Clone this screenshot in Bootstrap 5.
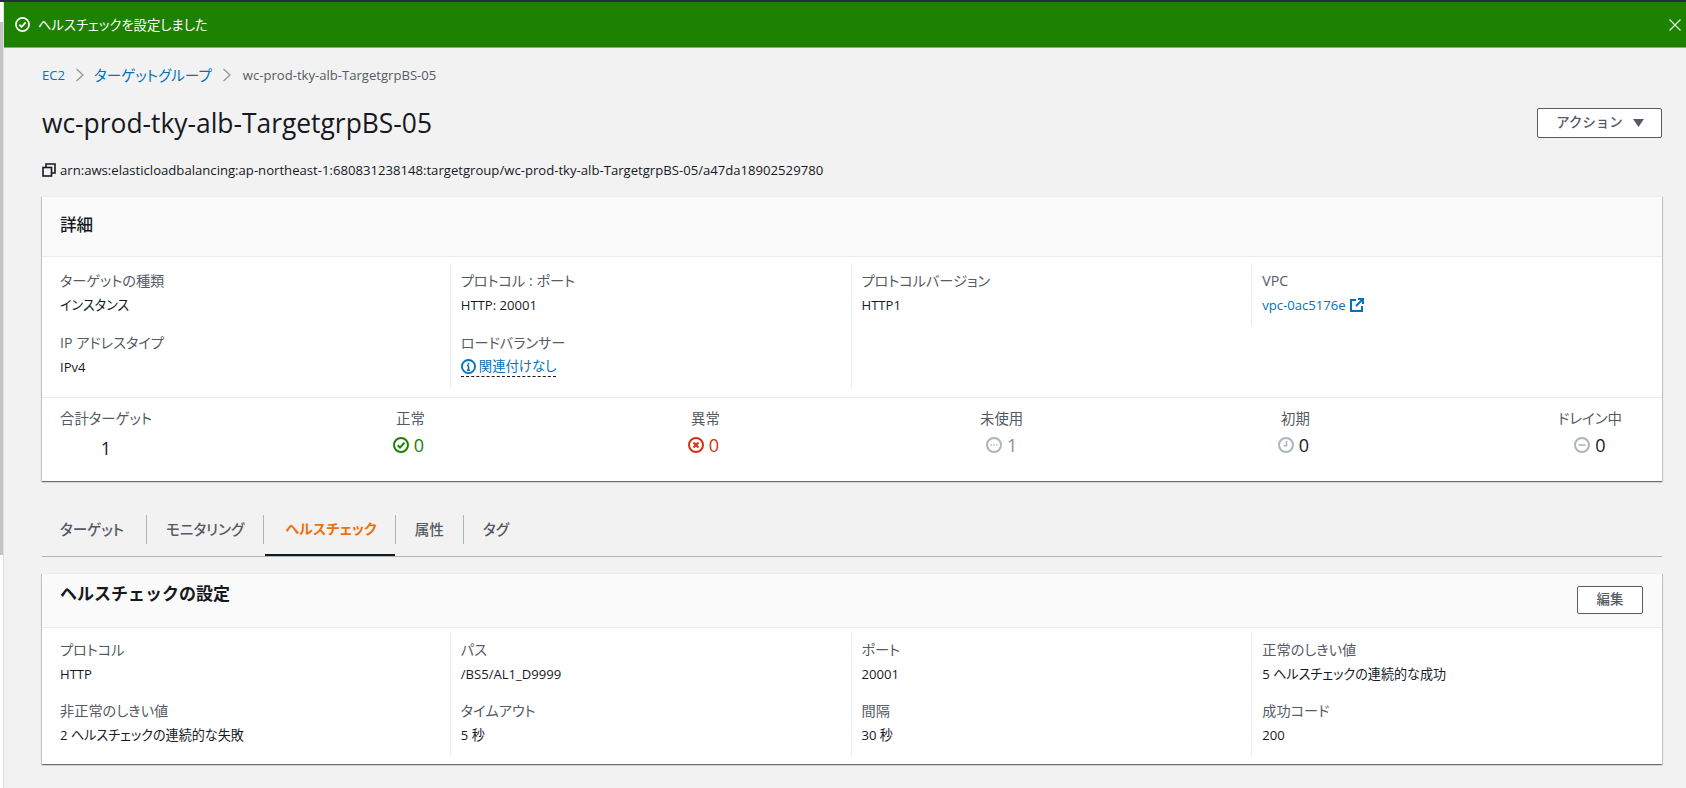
<!doctype html>
<html lang="ja">
<head>
<meta charset="utf-8">
<title>wc-prod-tky-alb-TargetgrpBS-05</title>
<link rel="stylesheet" href="https://cdn.jsdelivr.net/npm/bootstrap@5.3.0/dist/css/bootstrap.min.css">
<style>
html,body{height:100%;overflow:hidden}
body{background:#f2f2f2;color:#16191f;font-family:"Open Sans","Noto Sans CJK JP",sans-serif;font-size:13.1px;font-feature-settings:"palt";line-height:20px}
.top-strip{height:2px;background:#232f3e}
.page-shell{height:786px}
.side-rail{width:4px;background:#fff;border-right:1px solid #e0e0e0}
.side-thumb{width:3px;height:533px;margin-top:20px;background:#c4c4c4}
.flash-bar{height:46px;background:#1d8102;color:#fff;padding:0 5px 0 11px;gap:8px;border-bottom:1px solid #7fb56f;font-size:13.3px}
.flash-close{background:none;border:0;padding:0;width:12px;height:12px;line-height:0}
.page-body{padding:0 24px 0 38px}
.crumbs{height:20px;margin:17px 0 0;gap:9px;font-size:13.1px}
.crumbs a{color:#0073bb;text-decoration:none}
.crumb-jp{font-size:14.6px}
.crumb-now{color:#545b64;margin-left:2px}
.crumb-sep{width:11px;height:14px}
.head-row{height:30px;margin-top:23px}
.page-title{font-size:26.4px;font-weight:400;line-height:30px;margin:0}
.act-btn{width:125px;height:30px;background:#fff;border:1px solid #545b64;border-radius:2px;color:#545b64;font-size:13.4px;font-weight:500;padding:0 0 0 1px;line-height:1;gap:10px}
.act-btn:hover{background:#fff;color:#545b64;border-color:#545b64}
.arn-row{margin-top:22px;height:20px;gap:4px;font-size:13.14px}
.info-panel{background:#fff;border:0;border-radius:0;box-shadow:0 1px 1px 0 rgba(0,28,36,.45),1px 1px 1px 0 rgba(0,28,36,.15),-1px 1px 1px 0 rgba(0,28,36,.15);border-top:1px solid #eaeded}
.panel-one{margin-top:16px;height:285px}
.panel-two{margin-top:16px;height:191px}
.panel-head{background:#fafafa;border-bottom:1px solid #eaeded;padding:0 18px;font-size:17px;font-weight:700;border-radius:0}
.panel-one .panel-head{height:60px;line-height:56px;font-weight:500;font-size:16.6px}
.panel-two .panel-head{height:54px;line-height:40px;font-feature-settings:normal}
.kv-grid{display:grid;grid-template-columns:repeat(4,1fr);padding:0 10px 0 7px}
.panel-one .kv-grid{padding-top:6px;height:140px}
.panel-two .kv-grid{padding-top:5px}
.kv-col{padding:8px 10px 0;border-left:1px solid #eaeded}
.kv-col:first-child{border-left:0;padding-left:11px}
.panel-one .kv-col{height:125px}
.panel-one .kv-col.kv-short{height:62px}
.panel-two .kv-col{height:123px;padding-top:7px}
.kv-label{color:#545b64;font-size:14.2px;line-height:20px}
.kv-value{line-height:20px;margin-top:4px}
.kv-item+.kv-item{margin-top:18px}
.panel-two .kv-value{margin-top:4px}
.panel-two .kv-item+.kv-item{margin-top:17px}
.kv-link{color:#0073bb;text-decoration:none}
.lb-link{color:#0073bb;display:inline-flex;align-items:center;gap:3px;border-bottom:1px dashed #16191f;text-decoration:none;line-height:19px;font-size:13.4px}
.stat-row{display:grid;grid-template-columns:332px 295px 293px 297px 281px 1fr;border-top:1px solid #eaeded;padding:11px 0 0 18px}
.stat-cell{display:inline-flex;flex-direction:column;align-items:center;justify-self:start}
.stat-label{color:#545b64;font-size:14.4px;line-height:20px}
.stat-nudge{padding-left:4px}
.stat-num{display:flex;align-items:center;gap:5px;font-size:18px;line-height:26px;margin-top:3px}
.stat-one{margin-top:6px;color:#16191f}
.tone-ok{color:#1d8102}.tone-bad{color:#d13212}.tone-off{color:#879596}
.tab-strip{margin-top:21px;height:55px;border-bottom:1px solid #aab7b8;flex-wrap:nowrap}
.tab-item{position:relative;font-weight:500;color:#545b64;font-size:14.6px;padding:0 19px;height:29px;line-height:28px;margin-top:13px;border-right:1px solid #aab7b8;text-decoration:none}
.tab-item:first-child{padding:0 19px 0 18px;width:105px}
.tab-item:last-child{border-right:0}
.tab-item:hover{color:#545b64}
.tab-on,.tab-on:hover{color:#ec7211;font-weight:700;font-size:14.2px;padding:0 18px 0 21px}
.tab-on:after{content:"";position:absolute;left:1px;right:0;top:39px;height:2px;background:#16191f}
.edit-btn{width:66px;height:28px;background:#fff;border:1px solid #545b64;border-radius:2px;color:#545b64;font-size:13.4px;font-weight:500;padding:0;line-height:1;margin-top:12px}
.edit-btn:hover{background:#fff;color:#545b64;border-color:#545b64}
.head-split{padding-right:19px}
</style>
</head>
<body>
<div class="top-strip"></div>
<div class="d-flex page-shell">
  <div class="side-rail flex-shrink-0"><div class="side-thumb"></div></div>
  <main class="flex-grow-1">
    <div class="flash-bar d-flex align-items-center">
      <svg width="15" height="15" viewBox="0 0 16 16" fill="none" stroke="#fff" stroke-width="1.8"><circle cx="8" cy="8" r="7"/><path d="M4.6 8.2l2.4 2.4 4.4-4.8"/></svg>
      <span class="flex-grow-1">ヘルスチェックを設定しました</span>
      <button class="flash-close" type="button" aria-label="閉じる"><svg width="12" height="12" viewBox="0 0 12 12" fill="none" stroke="#e6efe3" stroke-width="1.2"><path d="M.5.5l11 11M11.500.5l-11 11"/></svg></button>
    </div>
    <div class="page-body">
      <nav class="crumbs d-flex align-items-center">
        <a href="#">EC2</a>
        <svg class="crumb-sep" viewBox="0 0 11 14" fill="none" stroke="#879596" stroke-width="1.2"><path d="M2.500 1L9 7l-6.500 6"/></svg>
        <a class="crumb-jp" href="#">ターゲットグループ</a>
        <svg class="crumb-sep" viewBox="0 0 11 14" fill="none" stroke="#879596" stroke-width="1.2"><path d="M2.500 1L9 7l-6.500 6"/></svg>
        <span class="crumb-now">wc-prod-tky-alb-TargetgrpBS-05</span>
      </nav>
      <div class="head-row d-flex justify-content-between align-items-center">
        <h1 class="page-title">wc-prod-tky-alb-TargetgrpBS-05</h1>
        <button class="btn act-btn d-flex align-items-center justify-content-center" type="button">アクション<svg width="11" height="8" viewBox="0 0 11 8"><path d="M0 0h11L5.500 8z" fill="#545b64"/></svg></button>
      </div>
      <div class="arn-row d-flex align-items-center">
        <svg width="14" height="14" viewBox="0 0 14 14" fill="none" stroke="#16191f" stroke-width="1.6"><rect x="1" y="4.500" width="8.500" height="8.500"/><path d="M4 4V1h9v9h-3"/></svg>
        <span>arn:aws:elasticloadbalancing:ap-northeast-1:680831238148:targetgroup/wc-prod-tky-alb-TargetgrpBS-05/a47da18902529780</span>
      </div>

      <section class="card info-panel panel-one">
        <div class="card-header panel-head">詳細</div>
        <div class="kv-grid">
          <div class="kv-col">
            <div class="kv-item"><div class="kv-label">ターゲットの種類</div><div class="kv-value">インスタンス</div></div>
            <div class="kv-item"><div class="kv-label">IP アドレスタイプ</div><div class="kv-value">IPv4</div></div>
          </div>
          <div class="kv-col">
            <div class="kv-item"><div class="kv-label">プロトコル : ポート</div><div class="kv-value">HTTP: 20001</div></div>
            <div class="kv-item"><div class="kv-label">ロードバランサー</div><div class="kv-value"><a class="lb-link" href="#"><svg width="15" height="15" viewBox="0 0 16 16" fill="none" stroke="#0073bb" stroke-width="2"><circle cx="8" cy="8" r="7"/><path d="M8 7v5M8 4v1.800M6.300 7H8M6.300 12h3.400" stroke-width="1.700"/></svg>関連付けなし</a></div></div>
          </div>
          <div class="kv-col">
            <div class="kv-item"><div class="kv-label">プロトコルバージョン</div><div class="kv-value">HTTP1</div></div>
          </div>
          <div class="kv-col kv-short">
            <div class="kv-item"><div class="kv-label">VPC</div><div class="kv-value"><a class="kv-link d-inline-flex align-items-center gap-1" href="#">vpc-0ac5176e <svg width="14" height="14" viewBox="0 0 14 14" fill="none" stroke="#0073bb" stroke-width="2"><path d="M6 2H1v11h11V8"/><path d="M8 1h5v5M13 1L6 8"/></svg></a></div></div>
          </div>
        </div>
        <div class="stat-row">
          <div class="stat-cell"><div class="stat-label">合計ターゲット</div><div class="stat-num stat-one">1</div></div>
          <div class="stat-cell"><div class="stat-label stat-nudge">正常</div><div class="stat-num tone-ok"><svg width="16" height="16" viewBox="0 0 16 16" fill="none" stroke="currentColor" stroke-width="2"><circle cx="8" cy="8" r="7"/><path d="M4.600 8.200l2.400 2.400 4.400-4.800"/></svg>0</div></div>
          <div class="stat-cell"><div class="stat-label stat-nudge">異常</div><div class="stat-num tone-bad"><svg width="16" height="16" viewBox="0 0 16 16" fill="none" stroke="currentColor" stroke-width="2"><circle cx="8" cy="8" r="7"/><path d="M5.500 5.500l5 5M10.500 5.500l-5 5"/></svg>0</div></div>
          <div class="stat-cell"><div class="stat-label">未使用</div><div class="stat-num tone-off"><svg width="16" height="16" viewBox="0 0 16 16" fill="none" stroke="#aab7b8" stroke-width="2"><circle cx="8" cy="8" r="7"/><path d="M4.500 8h1.400M7.300 8h1.400M10.100 8h1.400" stroke-width="1.300"/></svg>1</div></div>
          <div class="stat-cell"><div class="stat-label stat-nudge">初期</div><div class="stat-num"><svg width="16" height="16" viewBox="0 0 16 16" fill="none" stroke="#aab7b8" stroke-width="2"><circle cx="8" cy="8" r="7"/><path d="M8.500 4v4.700H5.500" stroke-width="1.500"/></svg>0</div></div>
          <div class="stat-cell"><div class="stat-label">ドレイン中</div><div class="stat-num"><svg width="16" height="16" viewBox="0 0 16 16" fill="none" stroke="#aab7b8" stroke-width="2"><circle cx="8" cy="8" r="7"/><path d="M4.500 8h7" stroke-width="1.600"/></svg>0</div></div>
        </div>
      </section>

      <nav class="nav tab-strip">
        <a class="tab-item" href="#">ターゲット</a>
        <a class="tab-item" href="#">モニタリング</a>
        <a class="tab-item tab-on" href="#">ヘルスチェック</a>
        <a class="tab-item" href="#">属性</a>
        <a class="tab-item" href="#">タグ</a>
      </nav>

      <section class="card info-panel panel-two">
        <div class="card-header panel-head head-split d-flex justify-content-between align-items-start">
          <span>ヘルスチェックの設定</span>
          <button class="btn edit-btn" type="button">編集</button>
        </div>
        <div class="kv-grid">
          <div class="kv-col">
            <div class="kv-item"><div class="kv-label">プロトコル</div><div class="kv-value">HTTP</div></div>
            <div class="kv-item"><div class="kv-label">非正常のしきい値</div><div class="kv-value">2 ヘルスチェックの連続的な失敗</div></div>
          </div>
          <div class="kv-col">
            <div class="kv-item"><div class="kv-label">パス</div><div class="kv-value">/BS5/AL1_D9999</div></div>
            <div class="kv-item"><div class="kv-label">タイムアウト</div><div class="kv-value">5 秒</div></div>
          </div>
          <div class="kv-col">
            <div class="kv-item"><div class="kv-label">ポート</div><div class="kv-value">20001</div></div>
            <div class="kv-item"><div class="kv-label">間隔</div><div class="kv-value">30 秒</div></div>
          </div>
          <div class="kv-col">
            <div class="kv-item"><div class="kv-label">正常のしきい値</div><div class="kv-value">5 ヘルスチェックの連続的な成功</div></div>
            <div class="kv-item"><div class="kv-label">成功コード</div><div class="kv-value">200</div></div>
          </div>
        </div>
      </section>
    </div>
  </main>
</div>
<script src="https://cdn.jsdelivr.net/npm/bootstrap@5.3.0/dist/js/bootstrap.bundle.min.js"></script>
</body>
</html>
